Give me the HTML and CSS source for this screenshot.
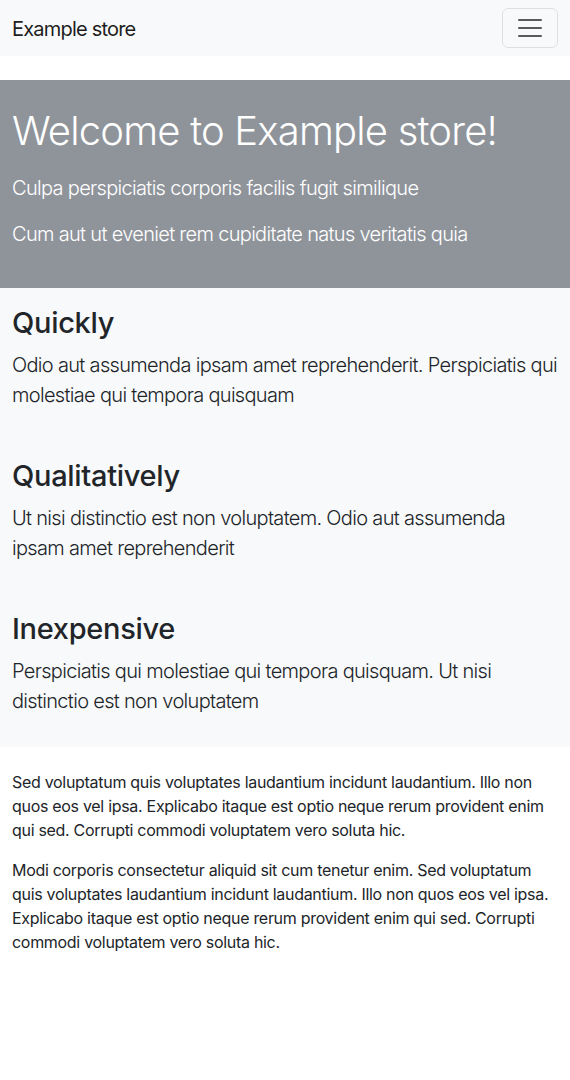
FILE: index.html
```html
<!DOCTYPE html>
<html lang="en">
<head>
<meta charset="utf-8">
<title>Example store</title>
<link rel="stylesheet" href="styles.css">
</head>
<body>
<nav class="navbar">
  <span class="brand">Example store</span>
  <button class="toggler" type="button" aria-label="Toggle navigation">
    <svg width="30" height="30" viewBox="0 0 30 30"><path stroke="rgba(33,37,41,0.75)" stroke-linecap="round" stroke-miterlimit="10" stroke-width="2" d="M4 7h22M4 15h22M4 23h22"/></svg>
  </button>
</nav>
<header class="hero">
  <h1 class="hero-title">Welcome to Example store!</h1>
  <p class="lead">Culpa perspiciatis corporis facilis fugit similique</p>
  <p class="lead">Cum aut ut eveniet rem cupiditate natus veritatis quia</p>
</header>
<section class="features">
  <div class="feature">
    <h2>Quickly</h2>
    <p class="lead">Odio aut assumenda ipsam amet reprehenderit. Perspiciatis qui molestiae qui tempora quisquam</p>
  </div>
  <div class="feature">
    <h2>Qualitatively</h2>
    <p class="lead">Ut nisi distinctio est non voluptatem. Odio aut assumenda ipsam amet reprehenderit</p>
  </div>
  <div class="feature">
    <h2>Inexpensive</h2>
    <p class="lead">Perspiciatis qui molestiae qui tempora quisquam. Ut nisi distinctio est non voluptatem</p>
  </div>
</section>
<main class="content">
  <p>Sed voluptatum quis voluptates laudantium incidunt laudantium. Illo non quos eos vel ipsa. Explicabo itaque est optio neque rerum provident enim qui sed. Corrupti commodi voluptatem vero soluta hic.</p>
  <p>Modi corporis consectetur aliquid sit cum tenetur enim. Sed voluptatum quis voluptates laudantium incidunt laudantium. Illo non quos eos vel ipsa. Explicabo itaque est optio neque rerum provident enim qui sed. Corrupti commodi voluptatem vero soluta hic.</p>
</main>
</body>
</html>
```
FILE: styles.css
```css
* { box-sizing: border-box; }
html, body { margin: 0; padding: 0; }
body {
  font-family: Inter, "Noto Sans", "Liberation Sans", sans-serif;
  font-size: 16px;
  line-height: 1.5;
  color: #212529;
  background: #fff;
  letter-spacing: -0.3px;
}
.navbar {
  display: flex;
  align-items: center;
  justify-content: space-between;
  background: #f8f9fa;
  padding: 8px 12px;
  height: 56px;
}
.brand {
  font-size: 20px;
  line-height: 30px;
  color: rgba(0,0,0,0.9);
  letter-spacing: -0.8px;
  padding-top: 2px;
}
.toggler {
  display: flex;
  align-items: center;
  justify-content: center;
  padding: 4px 12px;
  height: 40px;
  width: 56px;
  background: transparent;
  border: 1px solid rgba(0,0,0,0.1);
  border-radius: 6px;
}
.hero {
  margin-top: 24px;
  background: #8f949b;
  color: #fff;
  padding: 27px 12px 23px;
}
.hero-title {
  margin: 0 0 18px;
  font-size: 40px;
  font-weight: 300;
  line-height: 48px;
  letter-spacing: -0.8px;
}
.lead {
  font-size: 20px;
  font-weight: 300;
  line-height: 30px;
  margin: 0 0 16px;
  letter-spacing: -0.68px;
}
.features {
  background: #f8f9fa;
  padding: 0 12px;
}
.feature {
  padding: 17px 0 15px;
}
.feature h2 {
  margin: 0 0 10px;
  font-size: 29px;
  font-weight: 500;
  line-height: 35px;
  letter-spacing: -0.3px;
}
.content {
  padding: 23px 12px;
}
.content p {
  margin: 0 0 16px;
}
```
